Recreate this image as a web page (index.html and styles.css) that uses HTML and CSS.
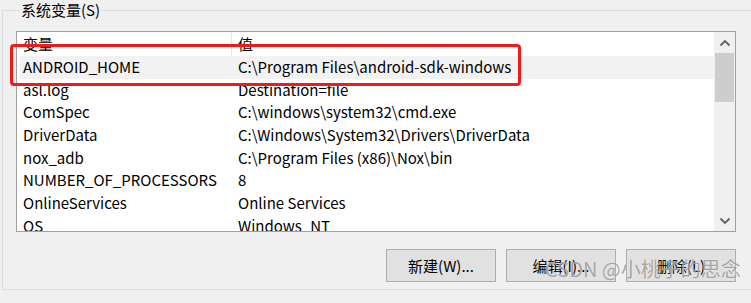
FILE: index.html
```html
<!DOCTYPE html>
<html lang="zh-CN">
<head>
    <meta charset="UTF-8">
    <title>系统变量</title>
    <link rel="stylesheet" href="styles.css">
</head>
<body>
    <fieldset class="group">
        <legend class="group-title">系统变量(S)</legend>
        <div class="listbox">
            <div class="list">
                <div class="row head">
                    <div class="cell name">变量</div>
                    <div class="cell value">值</div>
                </div>
                <div class="row selected">
                    <div class="cell name">ANDROID_HOME</div>
                    <div class="cell value">C:\Program Files\android-sdk-windows</div>
                </div>
                <div class="row">
                    <div class="cell name">asl.log</div>
                    <div class="cell value">Destination=file</div>
                </div>
                <div class="row">
                    <div class="cell name">ComSpec</div>
                    <div class="cell value">C:\windows\system32\cmd.exe</div>
                </div>
                <div class="row">
                    <div class="cell name">DriverData</div>
                    <div class="cell value">C:\Windows\System32\Drivers\DriverData</div>
                </div>
                <div class="row">
                    <div class="cell name">nox_adb</div>
                    <div class="cell value">C:\Program Files (x86)\Nox\bin</div>
                </div>
                <div class="row">
                    <div class="cell name">NUMBER_OF_PROCESSORS</div>
                    <div class="cell value">8</div>
                </div>
                <div class="row">
                    <div class="cell name">OnlineServices</div>
                    <div class="cell value">Online Services</div>
                </div>
                <div class="row">
                    <div class="cell name">OS</div>
                    <div class="cell value">Windows_NT</div>
                </div>
            </div>
            <div class="scrollbar">
                <div class="arrow">
                    <svg width="12" height="8" viewBox="0 0 12 8"><path d="M1.5 6.5 L6 2 L10.5 6.5" fill="none" stroke="#606060" stroke-width="1.8"/></svg>
                </div>
                <div class="track">
                    <div class="thumb"></div>
                </div>
                <div class="arrow">
                    <svg width="12" height="8" viewBox="0 0 12 8"><path d="M1.5 1.5 L6 6 L10.5 1.5" fill="none" stroke="#606060" stroke-width="1.8"/></svg>
                </div>
            </div>
        </div>
        <div class="buttons">
            <button class="btn">新建(W)...</button>
            <button class="btn">编辑(I)...</button>
            <button class="btn">删除(L)</button>
        </div>
    </fieldset>
    <div class="mark"></div>
    <div class="watermark">CSDN @小桃子的思念</div>
</body>
</html>
```

FILE: styles.css
```css
body {
    margin: 0;
    background-color: #f0f0f0;
    font-family: "Noto Sans CJK SC", "Noto Sans", sans-serif;
    font-size: 15px;
    color: #000;
    width: 751px;
    height: 303px;
    overflow: hidden;
    position: relative;
}
.group {
    margin: 0 -20px 0 2px;
    padding: 0 0 0 13px;
    border: 1px solid #dcdcdc;
    height: 290px;
    box-sizing: border-box;
}
.group-title {
    margin-left: 4px;
    padding: 0 1px;
    line-height: 20px;
    height: 20px;
}
.listbox {
    display: flex;
    margin-top: 11px;
    width: 720px;
    height: 201px;
    box-sizing: border-box;
    border: 1px solid #a0a0a0;
    background-color: #fff;
}
.list {
    flex: 1;
    overflow: hidden;
}
.row {
    display: flex;
    height: 22.7px;
    line-height: 22.7px;
    margin-left: 3px;
    white-space: nowrap;
}
.row.head {
    height: 24px;
    line-height: 24px;
    margin-left: 0;
}
.row.selected {
    background-color: #f2f2f2;
}
.cell.name {
    width: 215px;
    padding-left: 6px;
    box-sizing: border-box;
}
.row.head .cell.name {
    padding-left: 6px;
    border-right: 1px solid #e5e5e5;
}
.row:not(.head) .cell.name {
    width: 212px;
    padding-left: 3px;
}
.cell.value {
    padding-left: 6px;
}
.scrollbar {
    width: 21px;
    display: flex;
    flex-direction: column;
    background-color: #f0f0f0;
}
.arrow {
    height: 21px;
    display: flex;
    align-items: center;
    justify-content: center;
}
.track {
    flex: 1;
    padding: 0 1px;
}
.thumb {
    height: 49px;
    background-color: #cdcdcd;
}
.buttons {
    display: flex;
    gap: 10px;
    justify-content: flex-end;
    width: 720px;
    margin-top: 17px;
}
.btn {
    width: 110px;
    height: 33px;
    background-color: #e1e1e1;
    border: 1px solid #adadad;
    font-family: "Noto Sans CJK SC", "Noto Sans", sans-serif;
    font-size: 15px;
    color: #000;
    padding: 0;
}
.mark {
    position: absolute;
    left: 10px;
    top: 44px;
    width: 511px;
    height: 42px;
    box-sizing: border-box;
    border: 3.5px solid #f01a1a;
    border-radius: 4px;
}
.watermark {
    position: absolute;
    left: 545px;
    top: 254px;
    font-size: 20px;
    color: rgba(110, 110, 110, 0.6);
    text-shadow: 0 0 1px rgba(255, 255, 255, 0.8);
    white-space: nowrap;
}
```
